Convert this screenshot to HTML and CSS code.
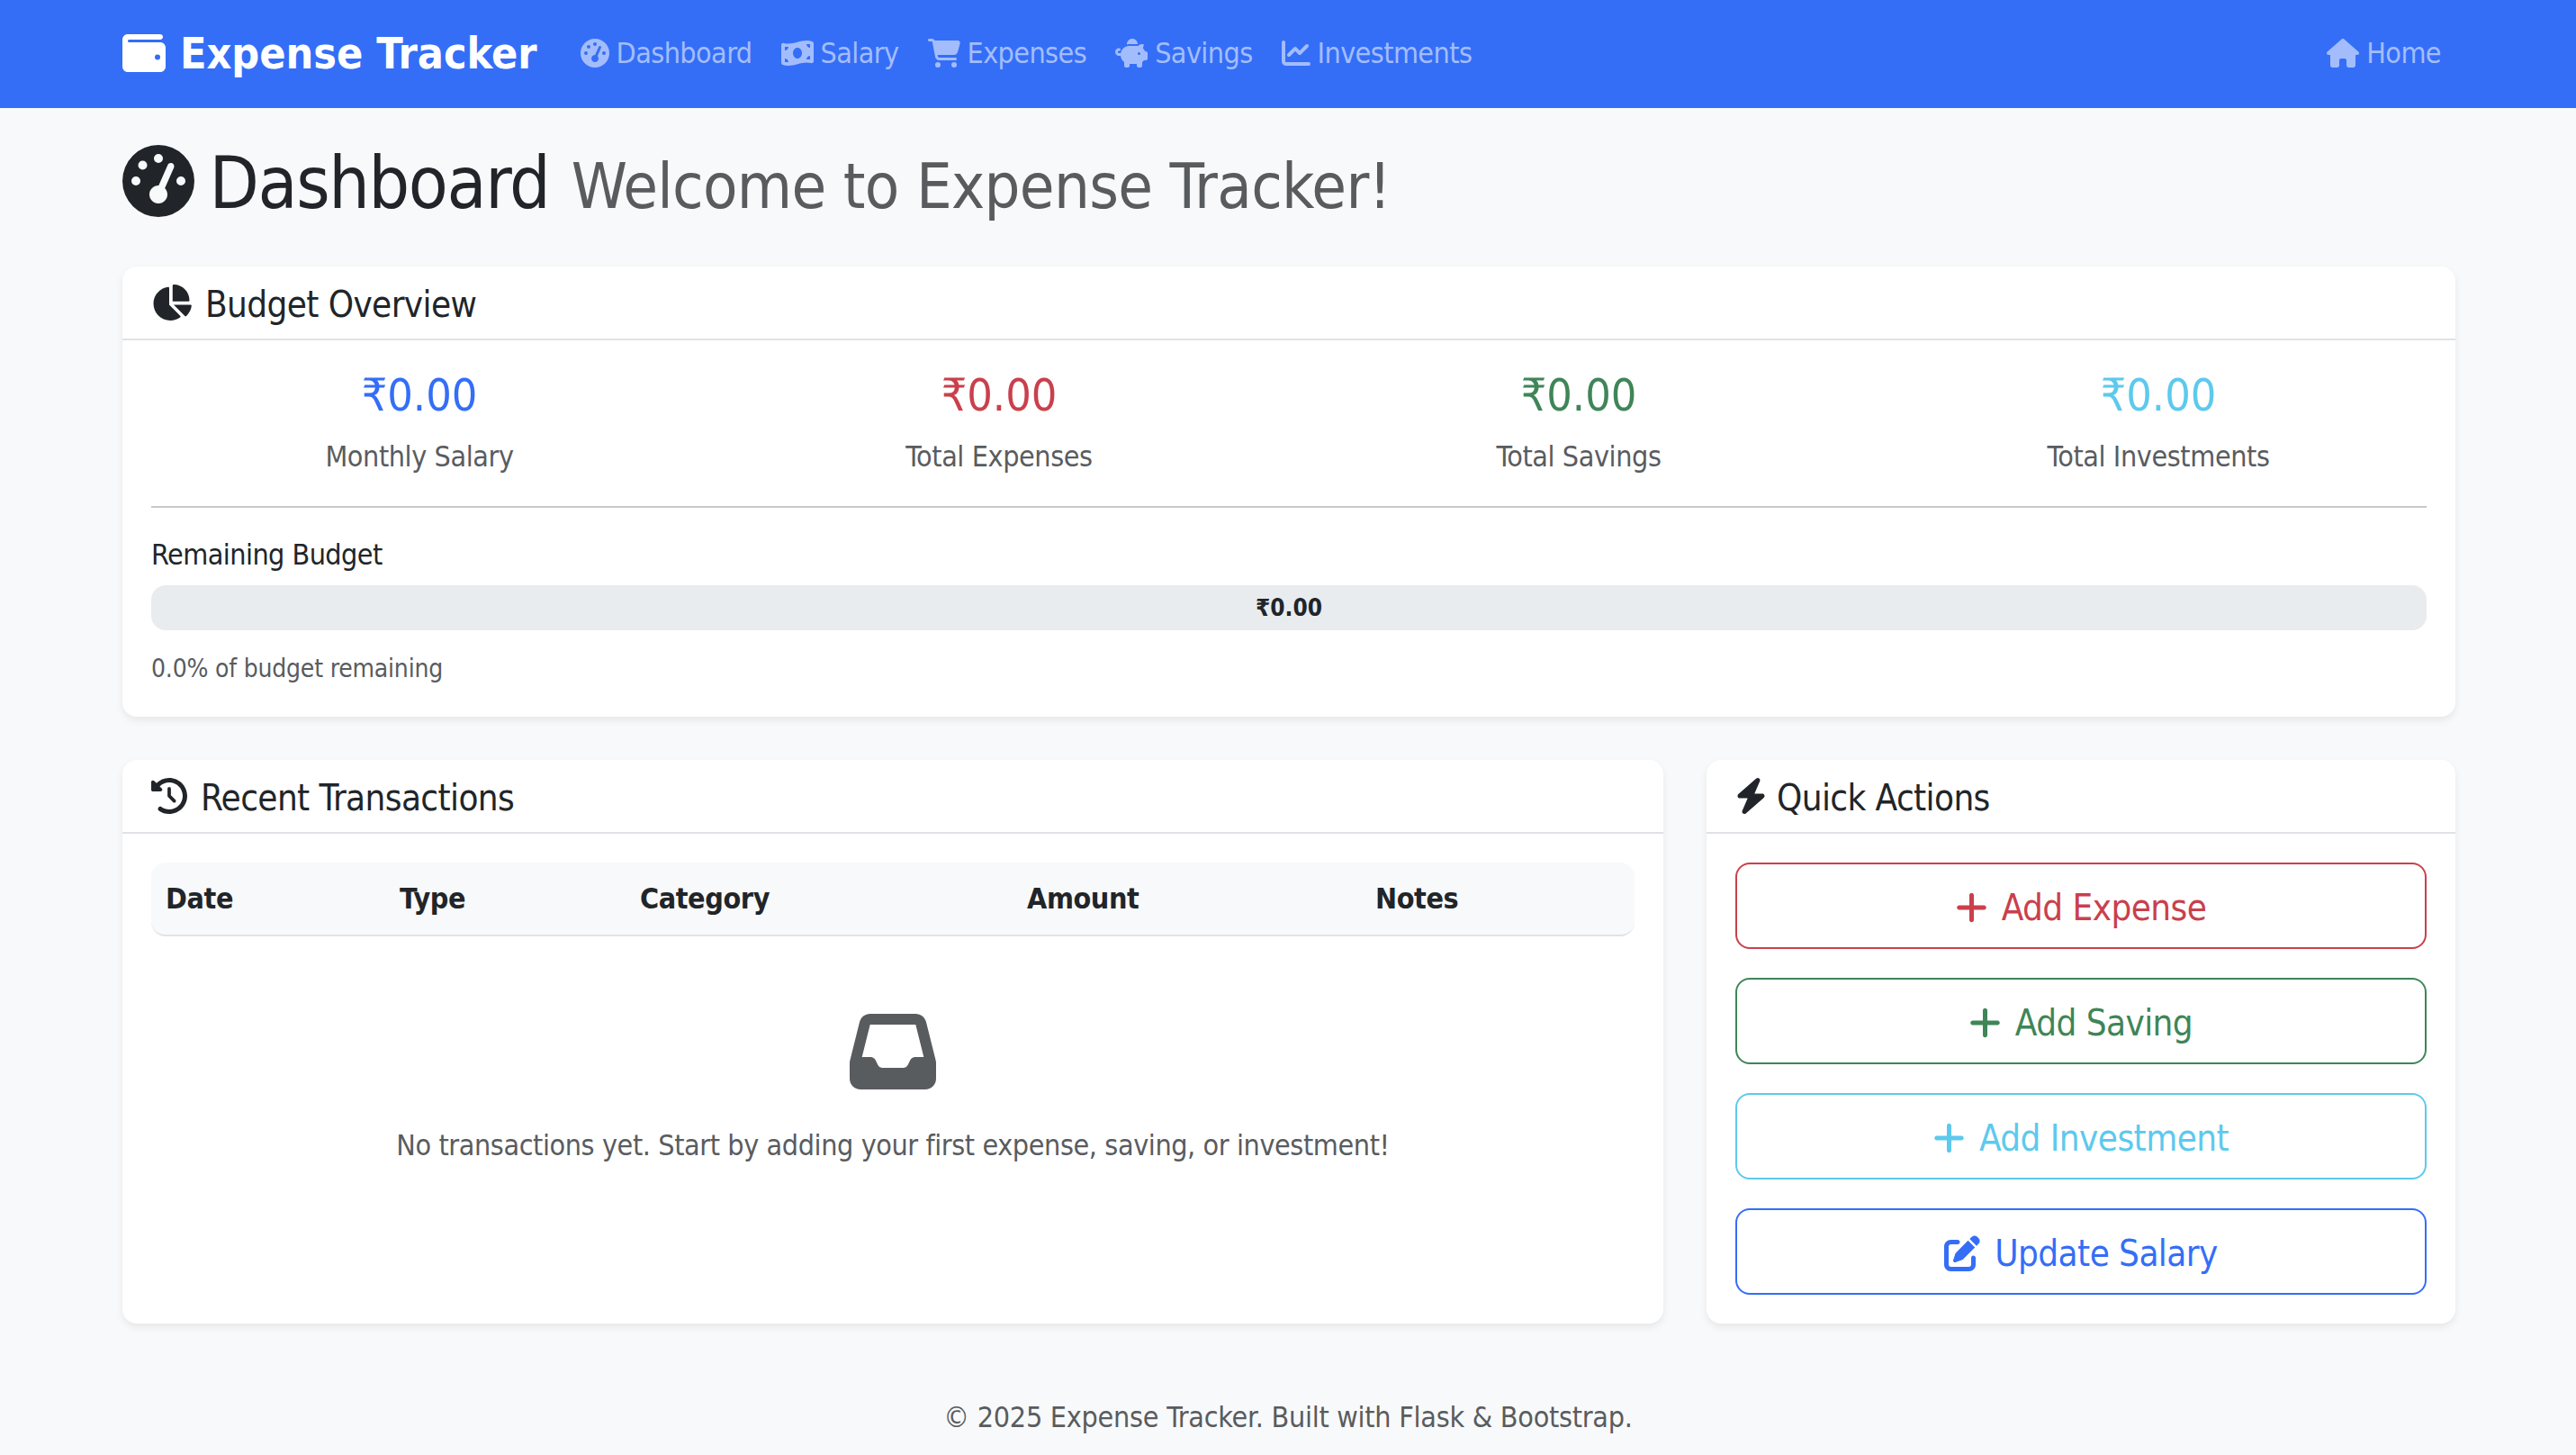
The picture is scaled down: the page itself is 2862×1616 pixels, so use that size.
FILE: index.html
```html
<!DOCTYPE html>
<html>
<head>
    <meta charset="utf-8">
    <title>Expense Tracker</title>
    <link rel="stylesheet" href="styles.css">
</head>
<body>
    <nav class="navbar">
        <a class="brand" href="#"><svg class="icon" viewBox="0 0 512 512"><path d="M64 32C28.7 32 0 60.7 0 96V416c0 35.3 28.7 64 64 64H448c35.3 0 64-28.7 64-64V192c0-35.3-28.7-64-64-64H80c-8.8 0-16-7.2-16-16s7.2-16 16-16H448c17.7 0 32-14.3 32-32s-14.3-32-32-32H64zM416 272a32 32 0 1 1 0 64 32 32 0 1 1 0-64z"/></svg>Expense Tracker</a>
        <a class="nav-link" href="#"><svg class="icon" viewBox="0 0 512 512"><path d="M0 256a256 256 0 1 1 512 0A256 256 0 1 1 0 256zM288 96a32 32 0 1 0 -64 0 32 32 0 1 0 64 0zM256 416c35.3 0 64-28.7 64-64c0-17.4-6.9-33.1-18.1-44.6L366 161.7c5.3-12.1-.2-26.3-12.3-31.6s-26.3 .2-31.6 12.3L257.9 288c-.6 0-1.3 0-1.9 0c-35.3 0-64 28.7-64 64s28.7 64 64 64zM176 144a32 32 0 1 0 -64 0 32 32 0 1 0 64 0zM96 288a32 32 0 1 0 0-64 32 32 0 1 0 0 64zm352-32a32 32 0 1 0 -64 0 32 32 0 1 0 64 0z"/></svg>Dashboard</a>
        <a class="nav-link" href="#"><svg class="icon" viewBox="0 0 576 512"><path d="M0 112.5V422.3c0 18 10.1 35 27 41.3c87 32.5 174 10.3 261-11.9c79.8-20.3 159.6-40.7 239.3-18.9c23 6.3 48.7-9.5 48.7-33.4V89.7c0-18-10.1-35-27-41.3C462 15.9 375 38.1 288 60.3C208.2 80.6 128.4 100.9 48.7 79.1C25.6 72.8 0 88.6 0 112.5zM288 352c-44.2 0-80-43-80-96s35.8-96 80-96s80 43 80 96s-35.8 96-80 96zM64 352c35.3 0 64 28.7 64 64H64V352zm64-208c0 35.3-28.7 64-64 64V144h64zM512 304v64H448c0-35.3 28.7-64 64-64zM448 96h64v64c-35.3 0-64-28.7-64-64z"/></svg>Salary</a>
        <a class="nav-link" href="#"><svg class="icon" viewBox="0 0 576 512"><path d="M0 24C0 10.7 10.7 0 24 0H69.5c22 0 41.5 12.8 50.6 32h411c26.3 0 45.5 25 38.6 50.4l-41 152.3c-8.5 31.4-37 53.3-69.5 53.3H170.7l5.4 28.5c2.2 11.3 12.1 19.5 23.6 19.5H488c13.3 0 24 10.7 24 24s-10.7 24-24 24H199.7c-34.6 0-64.3-24.6-70.7-58.5L77.4 54.5c-.7-3.8-4-6.5-7.9-6.5H24C10.7 48 0 37.3 0 24zM128 464a48 48 0 1 1 96 0 48 48 0 1 1 -96 0zm336-48a48 48 0 1 1 0 96 48 48 0 1 1 0-96z"/></svg>Expenses</a>
        <a class="nav-link" href="#"><svg class="icon" viewBox="0 0 576 512"><path fill-rule="evenodd" d="M400 96l0 .7c-5.3-.4-10.6-.7-16-.7H256c-16.5 0-32.5 2.1-47.8 6c-.1-2-.2-4-.2-6c0-53 43-96 96-96s96 43 96 96zm-16 32c3.5 0 7 .1 10.4 .3c4.2 .3 8.4 .7 12.6 1.3C424.6 109.1 450.8 96 480 96h11.5c10.4 0 18 9.8 15.5 19.9l-13.8 55.2c15.8 14.8 28.7 32.8 37.5 52.9H544c17.7 0 32 14.3 32 32v96c0 17.7-14.3 32-32 32H512c-9.1 12.1-19.9 22.9-32 32v64c0 17.7-14.3 32-32 32H416c-17.7 0-32-14.3-32-32V448H256v32c0 17.7-14.3 32-32 32H192c-17.7 0-32-14.3-32-32V416c-34.9-26.2-58.7-66.3-63.2-112H68c-37.6 0-68-30.4-68-68s30.4-68 68-68h4c13.3 0 24 10.7 24 24s-10.7 24-24 24H68c-11 0-20 9-20 20s9 20 20 20H99.2c12.1-59.8 57.7-107.5 116.3-122.8c12.9-3.4 26.5-5.2 40.5-5.2H384zm64 136a24 24 0 1 0 -48 0 24 24 0 1 0 48 0z"/></svg>Savings</a>
        <a class="nav-link" href="#"><svg class="icon" viewBox="0 0 512 512"><path d="M64 64c0-17.7-14.3-32-32-32S0 46.3 0 64V400c0 44.2 35.8 80 80 80H480c17.7 0 32-14.3 32-32s-14.3-32-32-32H80c-8.8 0-16-7.2-16-16V64zm406.6 86.6c12.5-12.5 12.5-32.8 0-45.3s-32.8-12.5-45.3 0L320 210.7l-57.4-57.4c-12.5-12.5-32.8-12.5-45.3 0l-112 112c-12.5 12.5-12.5 32.8 0 45.3s32.8 12.5 45.3 0L240 221.3l57.4 57.4c12.5 12.5 32.8 12.5 45.3 0l128-128z"/></svg>Investments</a>
        <a class="nav-link nav-home" href="#"><svg class="icon" viewBox="0 0 576 512"><path d="M575.8 255.5c0 18-15 32.1-32 32.1h-32l.7 160.2c0 2.7-.2 5.4-.5 8.1V472c0 22.1-17.9 40-40 40H456c-1.1 0-2.2 0-3.3-.1c-1.4 .1-2.8 .1-4.2 .1H416 392c-22.1 0-40-17.9-40-40V448 384c0-17.7-14.3-32-32-32H256c-17.7 0-32 14.3-32 32v64 24c0 22.1-17.9 40-40 40H160 128.1c-1.5 0-3-.1-4.5-.2c-1.2 .1-2.4 .2-3.6 .2H104c-22.1 0-40-17.9-40-40V360c0-.9 0-1.9 .1-2.8V287.6H32c-18 0-32-14-32-32.1c0-9 3-17 10-24L266.4 8c7-7 15-8 22-8s15 2 21 7L564.8 231.5c8 7 12 15 11 24z"/></svg>Home</a>
    </nav>

    <main class="container">
        <h1 class="page-title"><svg class="icon" viewBox="0 0 512 512"><path d="M0 256a256 256 0 1 1 512 0A256 256 0 1 1 0 256zM288 96a32 32 0 1 0 -64 0 32 32 0 1 0 64 0zM256 416c35.3 0 64-28.7 64-64c0-17.4-6.9-33.1-18.1-44.6L366 161.7c5.3-12.1-.2-26.3-12.3-31.6s-26.3 .2-31.6 12.3L257.9 288c-.6 0-1.3 0-1.9 0c-35.3 0-64 28.7-64 64s28.7 64 64 64zM176 144a32 32 0 1 0 -64 0 32 32 0 1 0 64 0zM96 288a32 32 0 1 0 0-64 32 32 0 1 0 0 64zm352-32a32 32 0 1 0 -64 0 32 32 0 1 0 64 0z"/></svg> Dashboard <small>Welcome to Expense Tracker!</small></h1>

        <!-- budget overview -->
        <section class="card">
            <h5 class="card-header"><svg class="icon" viewBox="0 0 576 512"><path d="M304 240V16.6c0-9 7-16.6 16-16.6C443.7 0 544 100.3 544 224c0 9-7.6 16-16.6 16H304zM32 272C32 150.7 122.1 50.3 239 34.3c9.2-1.3 17 6.1 17 15.4V288L412.5 444.5c6.7 6.7 6.2 17.7-1.5 23.1C371.8 495.6 323.8 512 272 512C139.5 512 32 404.6 32 272zm526.4 16c9.3 0 16.6 7.8 15.4 17c-7.7 55.9-34.6 105.6-73.9 142.3c-6 5.6-15.4 5.2-21.2-.7L320 288H558.4z"/></svg>Budget Overview</h5>
            <div class="card-body">
                <div class="stats">
                    <div class="stat"><h4 class="stat-value text-primary">₹0.00</h4><p class="stat-label">Monthly Salary</p></div>
                    <div class="stat"><h4 class="stat-value text-danger">₹0.00</h4><p class="stat-label">Total Expenses</p></div>
                    <div class="stat"><h4 class="stat-value text-success">₹0.00</h4><p class="stat-label">Total Savings</p></div>
                    <div class="stat"><h4 class="stat-value text-info">₹0.00</h4><p class="stat-label">Total Investments</p></div>
                </div>
                <hr class="divider">
                <div class="budget-label">Remaining Budget</div>
                <div class="progress">₹0.00</div>
                <p class="budget-note">0.0% of budget remaining</p>
            </div>
        </section>

        <div class="columns">
            <!-- transactions -->
            <section class="card">
                <h5 class="card-header"><svg class="icon" viewBox="0 0 512 512"><path d="M75 75L41 41C25.9 25.9 0 36.6 0 57.9V168c0 13.3 10.7 24 24 24H134.1c21.4 0 32.1-25.9 17-41l-30.8-30.8C155 85.5 203 64 256 64c106 0 192 86 192 192s-86 192-192 192c-40.8 0-78.6-12.7-109.7-34.4c-14.5-10.1-34.4-6.6-44.6 7.9s-6.6 34.4 7.9 44.6C151.2 495 201.7 512 256 512c141.4 0 256-114.6 256-256S397.4 0 256 0C185.3 0 121.3 28.7 75 75zm181 53c-13.3 0-24 10.7-24 24V256c0 6.4 2.5 12.5 7 17l72 72c9.4 9.4 24.6 9.4 33.9 0s9.4-24.6 0-33.9l-65-65V152c0-13.3-10.7-24-24-24z"/></svg>Recent Transactions</h5>
                <div class="card-body">
                    <table class="tx-table">
                        <thead>
                            <tr>
                                <th class="col-date">Date</th>
                                <th class="col-type">Type</th>
                                <th class="col-category">Category</th>
                                <th class="col-amount">Amount</th>
                                <th>Notes</th>
                            </tr>
                        </thead>
                    </table>
                    <div class="empty">
                        <svg class="icon empty-icon" viewBox="0 0 512 512"><path d="M121 32C91.6 32 66 52 58.9 80.5L1.9 308.4C.6 313.5 0 318.7 0 323.9V416c0 35.3 28.7 64 64 64H448c35.3 0 64-28.7 64-64V323.9c0-5.2-.6-10.4-1.9-15.5l-57-227.9C446 52 420.4 32 391 32H121zm0 64H391l48 192H387.8c-12.1 0-23.2 6.8-28.6 17.7l-14.3 28.6c-5.4 10.8-16.5 17.7-28.6 17.7H195.8c-12.1 0-23.2-6.8-28.6-17.7l-14.3-28.6c-5.4-10.8-16.5-17.7-28.6-17.7H73L121 96z"/></svg>
                        <p>No transactions yet. Start by adding your first expense, saving, or investment!</p>
                    </div>
                </div>
            </section>

            <!-- quick actions -->
            <section class="card">
                <h5 class="card-header card-header-bolt"><svg class="icon" viewBox="0 0 448 512"><path d="M349.4 44.6c5.9-13.7 1.5-29.7-10.6-38.5s-28.6-8-39.9 1.8l-256 224c-10 8.8-13.6 22.9-8.9 35.3S50.7 288 64 288H175.5L98.6 467.4c-5.9 13.7-1.5 29.7 10.6 38.5s28.6 8 39.9-1.8l256-224c10-8.8 13.6-22.9 8.9-35.3s-16.6-20.7-30-20.7H272.5L349.4 44.6z"/></svg>Quick Actions</h5>
                <div class="card-body actions">
                    <a class="btn btn-danger" href="#"><svg class="icon" viewBox="0 0 448 512"><path d="M256 80c0-17.7-14.3-32-32-32s-32 14.3-32 32V224H48c-17.7 0-32 14.3-32 32s14.3 32 32 32H192V432c0 17.7 14.3 32 32 32s32-14.3 32-32V288H400c17.7 0 32-14.3 32-32s-14.3-32-32-32H256V80z"/></svg>Add Expense</a>
                    <a class="btn btn-success" href="#"><svg class="icon" viewBox="0 0 448 512"><path d="M256 80c0-17.7-14.3-32-32-32s-32 14.3-32 32V224H48c-17.7 0-32 14.3-32 32s14.3 32 32 32H192V432c0 17.7 14.3 32 32 32s32-14.3 32-32V288H400c17.7 0 32-14.3 32-32s-14.3-32-32-32H256V80z"/></svg>Add Saving</a>
                    <a class="btn btn-info" href="#"><svg class="icon" viewBox="0 0 448 512"><path d="M256 80c0-17.7-14.3-32-32-32s-32 14.3-32 32V224H48c-17.7 0-32 14.3-32 32s14.3 32 32 32H192V432c0 17.7 14.3 32 32 32s32-14.3 32-32V288H400c17.7 0 32-14.3 32-32s-14.3-32-32-32H256V80z"/></svg>Add Investment</a>
                    <a class="btn btn-primary" href="#"><svg class="icon" viewBox="0 0 512 512"><path d="M471.6 21.7c-21.9-21.9-57.3-21.9-79.2 0L362.3 51.7l97.9 97.9 30.1-30.1c21.9-21.9 21.9-57.3 0-79.2L471.6 21.7zm-299.2 220c-6.1 6.1-10.8 13.6-13.5 21.9l-29.6 88.8c-2.9 8.6-.6 18.1 5.8 24.6s15.9 8.7 24.6 5.8l88.8-29.6c8.2-2.7 15.7-7.4 21.9-13.5L437.7 172.3 339.7 74.3 172.4 241.7zM96 64C43 64 0 107 0 160V416c0 53 43 96 96 96H352c53 0 96-43 96-96V320c0-17.7-14.3-32-32-32s-32 14.3-32 32v96c0 17.7-14.3 32-32 32H96c-17.7 0-32-14.3-32-32V160c0-17.7 14.3-32 32-32h96c17.7 0 32-14.3 32-32s-14.3-32-32-32H96z"/></svg>Update Salary</a>
                </div>
            </section>
        </div>
    </main>

    <footer class="footer">© 2025 Expense Tracker. Built with Flask &amp; Bootstrap.</footer>
</body>
</html>
```

FILE: styles.css
```css
* {
    box-sizing: border-box;
}

body {
    margin: 0;
    min-height: 1616px;
    background-color: #f8f9fa;
    color: #212529;
    font-family: "DejaVu Sans Condensed", "DejaVu Sans", sans-serif;
    font-size: 32px;
    line-height: 1.5;
    letter-spacing: -0.0125em;
}

a {
    text-decoration: none;
}

.icon {
    height: 1em;
    width: auto;
    fill: currentColor;
    vertical-align: -0.125em;
}

/* top bar */
.navbar {
    display: flex;
    align-items: center;
    height: 120px;
    padding: 0 134px 3px 136px;
    background-color: #346ef7;
}

.brand {
    display: flex;
    align-items: center;
    gap: 16px;
    margin-right: 32px;
    color: #fff;
    font-size: 48px;
    font-weight: 700;
    letter-spacing: 0;
}

.nav-link {
    display: flex;
    align-items: center;
    gap: 8px;
    padding: 0 16px;
    color: #a3bdfc;
    letter-spacing: -0.018em;
}

.nav-home {
    margin-left: auto;
}

/* page */
.container {
    padding: 36px 134px 0 136px;
}

.page-title {
    margin: 0 0 44px;
    font-size: 80px;
    font-weight: 400;
    line-height: 1.2;
    letter-spacing: -0.0174em;
}

.page-title .icon {
    margin-right: -5px;
}

.page-title small {
    margin-left: 3px;
    color: #595c5f;
    font-size: 70px;
    letter-spacing: -0.01em;
}

.card {
    margin-bottom: 48px;
    background-color: #fff;
    border-radius: 16px;
    box-shadow: 0 4px 8px rgba(0, 0, 0, 0.075);
}

.card-header {
    display: flex;
    align-items: center;
    gap: 15px;
    margin: 0;
    padding: 18px 32px 14px;
    border-bottom: 2px solid #dfe3e7;
    font-size: 40px;
    font-weight: 400;
    line-height: 48px;
    letter-spacing: -0.015em;
}

.card-header .icon {
    margin-top: -4px;
}

.card-header-bolt {
    gap: 11px;
}

.card-body {
    padding: 32px;
}

/* budget overview */
.stats {
    display: grid;
    grid-template-columns: repeat(4, 1fr);
    gap: 48px;
    text-align: center;
}

.stat-value {
    margin: 0 0 15px;
    font-size: 50px;
    font-weight: 400;
    line-height: 58px;
    letter-spacing: 0;
}

.stat-label {
    margin: 0;
    color: #595c5f;
}

.text-primary {
    color: #346ef7;
}

.text-danger {
    color: #c9404c;
}

.text-success {
    color: #3f8558;
}

.text-info {
    color: #5dc9ed;
}

.divider {
    margin: 31px 0 28px;
    border: 0;
    border-top: 2px solid #c7c8c9;
}

.budget-label {
    margin-bottom: 10px;
    letter-spacing: -0.017em;
}

.progress {
    height: 50px;
    background-color: #e9ecef;
    border-radius: 16px;
    font-size: 26px;
    font-weight: 700;
    line-height: 50px;
    letter-spacing: 0;
    text-align: center;
}

.budget-note {
    margin: 22px 0 0;
    color: #595c5f;
    font-size: 28px;
    letter-spacing: -0.007em;
}

/* lower row */
.columns {
    display: grid;
    grid-template-columns: 1712px 832px;
    gap: 48px;
}

.tx-table {
    width: 100%;
    border-collapse: separate;
    border-spacing: 0;
    table-layout: fixed;
}

.tx-table th {
    padding: 16px;
    height: 81px;
    background-color: #f8f9fa;
    border-bottom: 2px solid #dfe3e7;
    text-align: left;
}

.tx-table th:first-child {
    border-radius: 16px 0 0 16px;
}

.tx-table th:last-child {
    border-radius: 0 16px 16px 0;
}

.col-date {
    width: 260px;
}

.col-type {
    width: 267px;
}

.col-category {
    width: 430px;
}

.col-amount {
    width: 387px;
}

.empty {
    padding: 80px 0 71px;
    color: #595c5f;
    text-align: center;
}

.empty-icon {
    display: block;
    height: 96px;
    margin: 0 auto 32px;
}

.empty p {
    margin: 0;
}

/* quick action buttons */
.actions {
    display: flex;
    flex-direction: column;
    gap: 32px;
}

.btn {
    display: flex;
    align-items: center;
    justify-content: center;
    gap: 16px;
    height: 96px;
    padding-top: 3px;
    border: 2px solid currentColor;
    border-radius: 16px;
    font-size: 40px;
    letter-spacing: -0.014em;
}

.btn-danger {
    color: #c9404c;
}

.btn-success {
    color: #3f8558;
}

.btn-info {
    color: #5dc9ed;
}

.btn-primary {
    color: #346ef7;
}

.footer {
    padding-top: 32px;
    color: #595c5f;
    letter-spacing: -0.008em;
    text-align: center;
}
```
